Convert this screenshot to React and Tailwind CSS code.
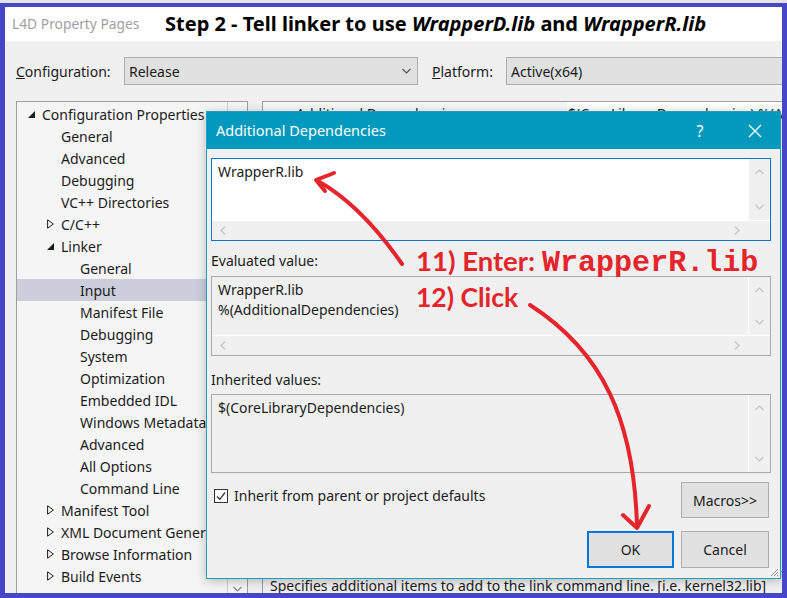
import React from "react";

const tree = [
  { lvl: 0, tri: "open", label: "Configuration Properties" },
  { lvl: 1, label: "General" },
  { lvl: 1, label: "Advanced" },
  { lvl: 1, label: "Debugging" },
  { lvl: 1, label: "VC++ Directories" },
  { lvl: 1, tri: "closed", label: "C/C++" },
  { lvl: 1, tri: "open", label: "Linker" },
  { lvl: 2, label: "General" },
  { lvl: 2, label: "Input", sel: true },
  { lvl: 2, label: "Manifest File" },
  { lvl: 2, label: "Debugging" },
  { lvl: 2, label: "System" },
  { lvl: 2, label: "Optimization" },
  { lvl: 2, label: "Embedded IDL" },
  { lvl: 2, label: "Windows Metadata" },
  { lvl: 2, label: "Advanced" },
  { lvl: 2, label: "All Options" },
  { lvl: 2, label: "Command Line" },
  { lvl: 1, tri: "closed", label: "Manifest Tool" },
  { lvl: 1, tri: "closed", label: "XML Document Generator" },
  { lvl: 1, tri: "closed", label: "Browse Information" },
  { lvl: 1, tri: "closed", label: "Build Events" },
  { lvl: 1, tri: "closed", label: "Custom Build Step" },
];

const indent = ["pl-[11px]", "pl-[30px]", "pl-[49px]"];

const Chevron = ({ dir, color = "#c4c4c4" }) => {
  const vertical = dir === "up" || dir === "down";
  const pts = {
    up: "0.5,5 4.5,1 8.5,5",
    down: "0.5,1 4.5,5 8.5,1",
    left: "5,0.5 1,4.5 5,8.5",
    right: "1,0.5 5,4.5 1,8.5",
  }[dir];
  return (
    <svg
      width={vertical ? 9 : 6}
      height={vertical ? 6 : 9}
      viewBox={vertical ? "0 0 9 6" : "0 0 6 9"}
      className="shrink-0"
    >
      <polyline points={pts} fill="none" stroke={color} strokeWidth="1.2" />
    </svg>
  );
};

const TreeIcon = ({ tri }) => {
  if (tri === "open")
    return (
      <svg width="7" height="7" viewBox="0 0 7 7" className="shrink-0">
        <polygon points="7,0 7,7 0,7" fill="#1e1e1e" />
      </svg>
    );
  if (tri === "closed")
    return (
      <svg width="7" height="10" viewBox="0 0 7 10" className="shrink-0">
        <polygon points="0.6,0.8 6.4,5 0.6,9.2" fill="none" stroke="#1e1e1e" strokeWidth="1" />
      </svg>
    );
  return <span className="w-[7px] shrink-0" />;
};

const ListBox = ({ lines, focused, hscroll, h }) => (
  <div
    className={`w-[560px] ${h} flex flex-col border ${
      focused ? "border-[#0078d7] bg-white" : "border-[#a9a9a9] bg-[#f0f0f0]"
    }`}
  >
    <div className="flex flex-1 min-h-0">
      <div className="flex-1 pl-[6px] pt-[3px] text-[14px] leading-[20px] text-[#1b1b1b]">
        {lines.map((l) => (
          <div key={l}>{l}</div>
        ))}
      </div>
      <div className="w-[22px] bg-[#f0f0f0] border-l border-white flex flex-col items-center justify-between py-[10px]">
        <Chevron dir="up" />
        <Chevron dir="down" />
      </div>
    </div>
    {hscroll && (
      <div className="h-[20px] flex border-t border-white">
        <div className="flex-1 bg-[#f0f0f0] flex items-center justify-between pl-[8px] pr-[8px]">
          <Chevron dir="left" />
          <Chevron dir="right" />
        </div>
        <div className="w-[22px] bg-[#f0f0f0]" />
      </div>
    )}
  </div>
);

const App = () => {
  return (
    <div className="relative w-[787px] h-[598px] bg-[#e4e4e4] pt-[3px] font-['Noto_Sans',sans-serif] text-[#1b1b1b]">
      <div className="relative h-[595px] border-[#4646c6] border-x-[5px] border-t-[4px] border-b-[5px] bg-[#f0f0f0] overflow-hidden">
        {/* window title */}
        <div className="h-[34px] bg-white flex items-center whitespace-nowrap">
          <span className="w-[160px] shrink-0 pl-[7px] text-[13.8px] text-[#a0a0a0]">L4D Property Pages</span>
          <span className="text-[20px] font-bold text-black">
            Step 2 - Tell linker to use <i>WrapperD.lib</i> and <i>WrapperR.lib</i>
          </span>
        </div>

        {/* configuration row */}
        <div className="mt-[16px] h-[28px] flex items-center text-[14px] whitespace-nowrap">
          <span className="w-[119px] shrink-0 pl-[11px]">
            <u>C</u>onfiguration:
          </span>
          <div className="w-[294px] shrink-0 h-[28px] bg-[#e1e1e1] border border-[#adadad] flex items-center justify-between pl-[4px] pr-[6px]">
            <span>Release</span>
            <Chevron dir="down" color="#555" />
          </div>
          <span className="w-[88px] shrink-0 pl-[14px]">
            <u>P</u>latform:
          </span>
          <div className="w-[300px] shrink-0 h-[28px] bg-[#e1e1e1] border border-[#adadad] flex items-center pl-[4px]">
            <span>Active(x64)</span>
          </div>
        </div>

        {/* main area */}
        <div className="mt-[16px] h-[500px] flex pl-[11px]">
          {/* tree */}
          <div className="w-[232px] shrink-0 h-[500px] border border-[#a0a0a0] bg-[#f5f5f5] flex">
            <div className="flex-1 pt-[1px] overflow-hidden">
              {tree.map((t, i) => (
                <div
                  key={i}
                  className={`h-[22px] flex items-center gap-[7px] whitespace-nowrap text-[14px] ${indent[t.lvl]} ${
                    t.sel ? "bg-[#cccedb]" : ""
                  }`}
                >
                  <TreeIcon tri={t.tri} />
                  <span>{t.label}</span>
                </div>
              ))}
            </div>
            <div className="w-[20px] shrink-0 border-l border-[#d0d0d0] flex flex-col items-center justify-between pt-[9px] pb-[8px]">
              <Chevron dir="up" color="#888" />
              <Chevron dir="down" color="#888" />
            </div>
          </div>

          {/* property grid */}
          <div className="ml-[14px] flex-1 flex flex-col">
            <div className="h-[477px] border-t border-l border-[#a0a0a0] bg-white">
              <div className="h-[22px] flex items-center text-[14px] whitespace-nowrap">
                <div className="w-[304px] shrink-0 h-full bg-[#f7f7f7] pl-[33px] flex items-center">
                  Additional Dependencies
                </div>
                <div className="pl-[1px]">$(CoreLibraryDependencies);%(AdditionalDependencies)</div>
              </div>
            </div>
            <div className="h-[30px] border-l border-t border-[#a0a0a0] pl-[7px] pt-[3px] text-[14px] whitespace-nowrap">
              Specifies additional items to add to the link command line. [i.e. kernel32.lib]
            </div>
          </div>
        </div>

        {/* dialog */}
        <div className="absolute left-[201px] top-[104px] w-[575px] h-[468px] border border-[#1d9fc0] bg-[#f0f0f0] shadow-[0_2px_10px_rgba(0,0,0,0.25)]">
          <div className="h-[37px] bg-[#0399bd] flex items-center text-white">
            <span className="pl-[9px] text-[14.5px] flex-1">Additional Dependencies</span>
            <span className="w-[20px] text-center text-[16px] mr-[38px]">?</span>
            <svg width="14" height="14" viewBox="0 0 14 14" className="mr-[18px]">
              <path d="M1 1 L13 13 M13 1 L1 13" stroke="#fff" strokeWidth="1.3" />
            </svg>
          </div>
          <div className="pl-[4px] pt-[9px] text-[14px]">
            <ListBox lines={["WrapperR.lib"]} focused hscroll h="h-[83px]" />
            <div className="mt-[10px] h-[20px] leading-[20px]">Evaluated value:</div>
            <div className="mt-[5px]">
              <ListBox lines={["WrapperR.lib", "%(AdditionalDependencies)"]} hscroll h="h-[80px]" />
            </div>
            <div className="mt-[14px] h-[20px] leading-[20px]">Inherited values:</div>
            <div className="mt-[4px]">
              <ListBox lines={["$(CoreLibraryDependencies)"]} h="h-[79px]" />
            </div>
            <div className="mt-[9px] w-[558px] flex justify-between items-start">
              <div className="flex items-center mt-[3px] ml-[3px] gap-[6px]">
                <div className="w-[14px] h-[14px] border border-[#333] bg-white flex items-center justify-center">
                  <svg width="10" height="10" viewBox="0 0 10 10">
                    <polyline points="1,5.5 3.8,8.3 9,1.5" fill="none" stroke="#333" strokeWidth="1.3" />
                  </svg>
                </div>
                <span>Inherit from parent or project defaults</span>
              </div>
              <div className="w-[88px] h-[36px] bg-[#e1e1e1] border border-[#adadad] flex items-center justify-center">
                Macros&gt;&gt;
              </div>
            </div>
            <div className="mt-[13px] w-[558px] flex justify-end gap-[7px]">
              <div className="w-[87px] h-[37px] bg-[#e1e1e1] border-2 border-[#0078d7] flex items-center justify-center">
                OK
              </div>
              <div className="w-[88px] h-[37px] bg-[#e1e1e1] border border-[#adadad] flex items-center justify-center">
                Cancel
              </div>
            </div>
          </div>
          <svg width="10" height="10" viewBox="0 0 10 10" className="absolute right-[1px] bottom-[1px]">
            <path d="M9 2 L2 9 M9 5 L5 9 M9 8 L8 9" stroke="#9a9a9a" strokeWidth="1" />
          </svg>
        </div>
      </div>

      {/* annotations */}
      <div className="absolute left-[416px] top-[240px] flex items-baseline text-[#e5242b] font-bold whitespace-nowrap">
        <span className="font-['Lato',sans-serif] text-[27.5px]">11) Enter:</span>
        <span className="ml-[7px] font-['Liberation_Mono',monospace] text-[30px]">WrapperR.lib</span>
      </div>
      <div className="absolute left-[416px] top-[278px] text-[#e5242b] font-bold font-['Lato',sans-serif] text-[26.5px] whitespace-nowrap">
        12) Click
      </div>
      <svg className="absolute left-0 top-0 pointer-events-none" width="787" height="598" viewBox="0 0 787 598">
        <g fill="none" stroke="#e5242b" strokeWidth="4" strokeLinecap="round" strokeLinejoin="round">
          <path d="M402 264 Q362 206 318 181" />
          <path d="M334 173 L316 180 L325 191" />
          <path d="M530 305 C603 352 634 420 637 526" />
          <path d="M623 515 L637 528 L649 506" />
        </g>
      </svg>
    </div>
  );
};

export default App;
